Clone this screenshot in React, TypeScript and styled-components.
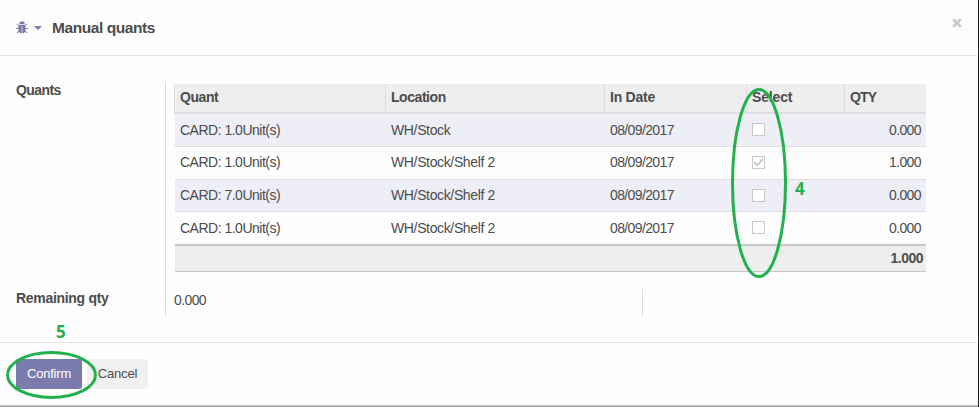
import React from "react";
import styled, { createGlobalStyle } from "styled-components";

const GlobalStyle = createGlobalStyle`
  * { box-sizing: border-box; }
  body { margin: 0; background: #fff; }
`;

const Dialog = styled.div`
  position: relative;
  display: flex;
  flex-direction: column;
  width: 979px;
  height: 407px;
  overflow: hidden;
  background: #fefefe;
  border-right: 1px solid #1d1d1f;
  color: #4c4c4c;
  font: 14px/16px "Liberation Sans", Arial, sans-serif;
  white-space: nowrap;
`;

const Header = styled.header`
  display: flex;
  align-items: center;
  height: 56px;
  padding: 0 16px;
  border-bottom: 1px solid #e5e5e5;
`;

const DebugButton = styled.button`
  display: flex;
  align-items: center;
  gap: 6px;
  width: 36px;
  padding: 0;
  border: 0;
  background: none;
  color: #7c7bad;
`;

const Title = styled.h4`
  margin: 0;
  font-size: 15.5px;
  line-height: 20px;
  letter-spacing: -0.42px;
`;

const CloseButton = styled.button`
  display: flex;
  margin: 0 0 9px auto;
  padding: 0;
  border: 0;
  background: none;
  color: #ccc;
`;

const Body = styled.main`
  height: 286px;
  padding: 26px 16px 0;
`;

const FieldRow = styled.div<{ $height: number }>`
  display: flex;
  height: ${(p) => p.$height}px;
`;

const Label = styled.label<{ $top: number; $spacing?: number }>`
  width: 150px;
  padding-top: ${(p) => p.$top}px;
  border-right: 1px solid #ddd;
  font-weight: bold;
  letter-spacing: ${(p) => p.$spacing ?? 0}px;
`;

const Value = styled.div`
  width: 477px;
  height: 27px;
  padding: 3px 0 0 8px;
  border-right: 1px solid #ddd;
  letter-spacing: -0.6px;
`;

const Table = styled.div`
  width: 752px;
  margin: 2px 0 0 8px;
`;

const TableHead = styled.div`
  display: grid;
  grid-template-columns: 211px 219px 142px 98px 82px;
  height: 30px;
  background: #eee;
  border-bottom: 2px solid #ddd;
`;

const HeadCell = styled.div<{ $spacing?: number }>`
  padding: 5px 0 0 5px;
  border-left: 1px solid #ddd;
  font-weight: bold;
  letter-spacing: ${(p) => p.$spacing ?? 0}px;
`;

const TableRow = styled.div<{ $shaded: boolean; $height: number; $top: number; $last: boolean }>`
  display: grid;
  grid-template-columns: 210px 219px 142px 98px 82px;
  height: ${(p) => p.$height}px;
  padding-top: ${(p) => p.$top}px;
  margin-left: 1px;
  background: ${(p) => (p.$shaded ? "#eeeef6" : "#fefefe")};
  border-bottom: ${(p) => (p.$last ? "0" : "1px solid #ddd")};
`;

const Cell = styled.div<{ $left?: number; $spacing?: number }>`
  padding-left: ${(p) => p.$left ?? 6}px;
  letter-spacing: ${(p) => p.$spacing ?? 0}px;
`;

const NumberCell = styled(Cell)`
  padding-right: 5px;
  text-align: right;
`;

const Checkbox = styled.span<{ $top: number }>`
  display: block;
  width: 13px;
  height: 13px;
  margin-top: ${(p) => p.$top}px;
  background: #fff;
  border: 1px solid #c8c8c8;

  svg { display: block; }
`;

const Total = styled.div`
  height: 28px;
  margin-left: 1px;
  padding: 4px 3px 0 0;
  background: #eee;
  border-top: 2px solid #c8c8c8;
  border-bottom: 1px solid #c8c8c8;
  font-weight: bold;
  letter-spacing: -0.5px;
  text-align: right;
`;

const Footer = styled.footer`
  display: flex;
  gap: 5px;
  height: 63px;
  padding: 16px 16px 0;
  border-top: 1px solid #e5e5e5;
`;

const Button = styled.button<{ $primary?: boolean }>`
  width: ${(p) => (p.$primary ? 66 : 61)}px;
  height: 30px;
  padding: 0 0 1px;
  border: 0;
  border-radius: ${(p) => (p.$primary ? "2px" : "3px")};
  background: ${(p) => (p.$primary ? "#7c7bad" : "#f0f0f0")};
  color: ${(p) => (p.$primary ? "#fff" : "#4c4c4c")};
  font: 13px/18px "Liberation Sans", Arial, sans-serif;
  letter-spacing: -0.2px;
`;

const BottomEdge = styled.div`
  height: 2px;
  background: linear-gradient(#c6c6c6 50%, #9d9d9d 50%);
`;

const Annotations = styled.svg`
  position: absolute;
  inset: 0;
  pointer-events: none;
`;

const StepNumber = styled.span<{ $x: number; $y: number }>`
  position: absolute;
  left: ${(p) => p.$x}px;
  top: ${(p) => p.$y}px;
  color: #22b14c;
  font: bold 17px/20px "Open Sans", sans-serif;
`;

const quants = [
  { name: "CARD: 1.0Unit(s)", location: "WH/Stock", selected: false, qty: "0.000", height: 33, top: 8, checkTop: 1 },
  { name: "CARD: 1.0Unit(s)", location: "WH/Stock/Shelf 2", selected: true, qty: "1.000", height: 33, top: 7, checkTop: 2 },
  { name: "CARD: 7.0Unit(s)", location: "WH/Stock/Shelf 2", selected: false, qty: "0.000", height: 32, top: 7, checkTop: 2 },
  { name: "CARD: 1.0Unit(s)", location: "WH/Stock/Shelf 2", selected: false, qty: "0.000", height: 32, top: 8, checkTop: 1 },
];

const BugIcon = () => (
  <svg width="12" height="13" viewBox="0 0 12 13" fill="none" stroke="currentColor">
    <path d="M3.3 3a2.7 2.7 0 0 1 5.4 0Z" fill="currentColor" stroke="none" />
    <path d="M2.4 3.7h7.2v5.3c0 2-1.3 3.3-3.6 3.3S2.4 11 2.4 9Z" fill="currentColor" stroke="none" />
    <path d="M6 5v7" stroke="#ddd6e8" strokeWidth=".8" />
    <path d="M3 4.8 1 2.8M9 4.8l2-2M3 7.5H0M9 7.5h3M3.2 9.8 1 12M8.8 9.8 11 12" />
  </svg>
);

export default function App() {
  return (
    <>
      <GlobalStyle />
      <Dialog>
        <Header>
          <DebugButton aria-label="Debug">
            <BugIcon />
            <svg width="8" height="4" viewBox="0 0 8 4">
              <path d="M0 0h8L4 4Z" fill="currentColor" />
            </svg>
          </DebugButton>
          <Title>Manual quants</Title>
          <CloseButton aria-label="Close">
            <svg width="10" height="10" viewBox="0 0 10 10" stroke="currentColor" strokeWidth="3">
              <path d="m1.2 1.2 7.6 7.6M8.8 1.2 1.2 8.8" />
            </svg>
          </CloseButton>
        </Header>
        <Body>
          <FieldRow $height={207}>
            <Label $top={0} $spacing={-0.6}>Quants</Label>
            <Table>
              <TableHead>
                <HeadCell $spacing={-0.45}>Quant</HeadCell>
                <HeadCell $spacing={-0.45}>Location</HeadCell>
                <HeadCell $spacing={-0.25}>In Date</HeadCell>
                <HeadCell $spacing={-0.15}>Select</HeadCell>
                <HeadCell $spacing={-0.8}>QTY</HeadCell>
              </TableHead>
              {quants.map((q, i) => (
                <TableRow key={i} $shaded={i % 2 === 0} $height={q.height} $top={q.top} $last={i === 3}>
                  <Cell $left={5} $spacing={-0.5}>{q.name}</Cell>
                  <Cell $spacing={-0.36}>{q.location}</Cell>
                  <Cell $spacing={-0.62}>08/09/2017</Cell>
                  <Cell>
                    <Checkbox $top={q.checkTop}>
                      {q.selected && (
                        <svg width="11" height="11" viewBox="0 0 11 11" fill="none" stroke="#b5b5b5" strokeWidth="1.3">
                          <path d="m1 5 3 3.3 6-6" />
                        </svg>
                      )}
                    </Checkbox>
                  </Cell>
                  <NumberCell $spacing={-0.6}>{q.qty}</NumberCell>
                </TableRow>
              ))}
              <Total>1.000</Total>
            </Table>
          </FieldRow>
          <FieldRow $height={27}>
            <Label $top={1} $spacing={-0.3}>Remaining qty</Label>
            <Value>0.000</Value>
          </FieldRow>
        </Body>
        <Footer>
          <Button $primary>Confirm</Button>
          <Button>Cancel</Button>
        </Footer>
        <BottomEdge />
        <Annotations width="978" height="407" fill="none" stroke="#22b14c" strokeWidth="3">
          <ellipse cx="759" cy="183" rx="26.5" ry="93.5" />
          <ellipse cx="51.5" cy="375" rx="44" ry="22.5" />
        </Annotations>
        <StepNumber $x={795} $y={179}>4</StepNumber>
        <StepNumber $x={56} $y={322}>5</StepNumber>
      </Dialog>
    </>
  );
}
